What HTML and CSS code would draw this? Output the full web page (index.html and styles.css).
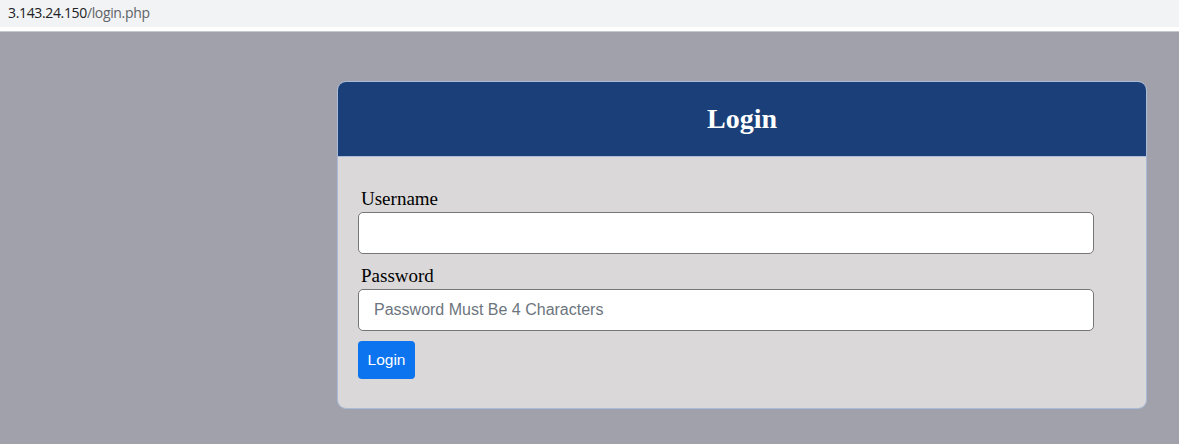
FILE: index.html
```html
<!DOCTYPE html>
<html lang="en">
<head>
<meta charset="utf-8">
<title>Login</title>
<link rel="stylesheet" href="styles.css">
</head>
<body>
<div class="urlbar">
  <span class="host">3.143.24.150</span><span class="path">/login.php</span>
</div>
<div class="page">
  <div class="card">
    <div class="card-header"><h2 class="title">Login</h2></div>
    <form class="card-body">
      <label class="label" for="u">Username</label>
      <input class="input" id="u" type="text">
      <label class="label label-second" for="p">Password</label>
      <input class="input" id="p" type="password" placeholder="Password Must Be 4 Characters">
      <button class="btn" type="button">Login</button>
    </form>
  </div>
</div>
</body>
</html>
```

FILE: styles.css
```css
html, body {
  margin: 0;
  padding: 0;
  height: 100%;
}
body {
  background: #a1a1ac;
  display: flex;
  flex-direction: column;
}
.urlbar {
  height: 27px;
  background: #f1f3f4;
  border-bottom: 4px solid #ffffff;
  box-shadow: 0 1px 0 #c6c8d0;
  font-family: "Open Sans", "Liberation Sans", sans-serif;
  font-size: 14px;
  line-height: 26px;
  padding-left: 8px;
  letter-spacing: -0.35px;
}
.host { color: #202124; }
.path { color: #5f6368; }
.page {
  padding: 50px 0 0 337px;
  display: flex;
}
.card {
  width: 808px;
  border: 1px solid #a9bbd8;
  border-radius: 9px;
  overflow: hidden;
  background: #dad8d9;
}
.card-header {
  background: #1b4079;
  height: 74px;
  border-bottom: 1px solid #a9bbd8;
  display: flex;
  align-items: center;
  justify-content: center;
}
.title {
  margin: 0;
  color: #ffffff;
  font-family: "Liberation Serif", "Times New Roman", serif;
  font-weight: bold;
  font-size: 28px;
  line-height: 32px;
}
.card-body {
  padding: 30px 20px 29px 20px;
  display: flex;
  flex-direction: column;
  align-items: flex-start;
  font-family: "Liberation Serif", "Times New Roman", serif;
}
.label {
  font-size: 19px;
  line-height: 23px;
  color: #000;
  padding-left: 3px;
  margin-bottom: 2px;
}
.label-second {
  margin-top: 10px;
}
.input {
  box-sizing: border-box;
  width: 736px;
  height: 42px;
  border: 1px solid #767676;
  border-radius: 5px;
  background: #ffffff;
  padding: 0 15px;
  font-family: "Liberation Sans", Arial, sans-serif;
  font-size: 16px;
  margin: 0;
}
.input::placeholder {
  color: #6c757d;
}
.btn {
  margin-top: 10px;
  height: 38px;
  width: 57px;
  border: none;
  border-radius: 4px;
  background: #0b74ee;
  color: #ffffff;
  font-family: "Liberation Sans", Arial, sans-serif;
  font-size: 15.5px;
  padding: 0;
}
```
